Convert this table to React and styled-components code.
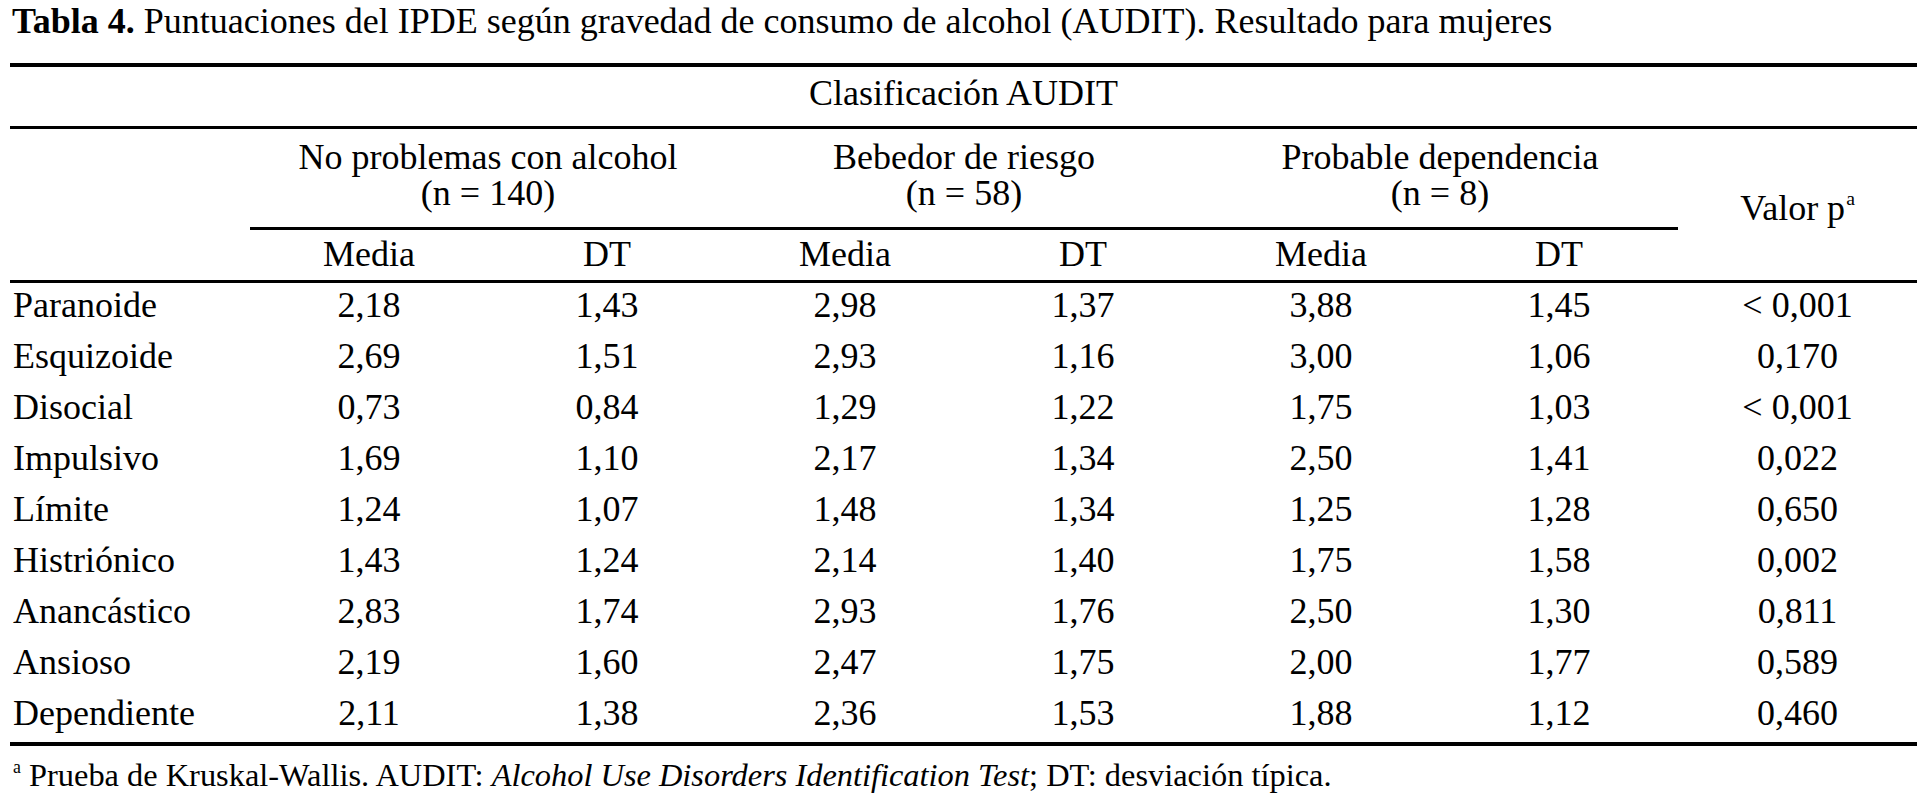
import React from "react";
import styled, { createGlobalStyle } from "styled-components";

const GlobalStyle = createGlobalStyle`
  body {
    margin: 0;
    background: #ffffff;
    color: #000000;
    font-family: "Liberation Serif", "Times New Roman", serif;
  }
`;

const Page = styled.div`
  width: 1907px;
  padding-left: 10px;
`;

const Caption = styled.div`
  font-size: 36px;
  line-height: 40px;
  padding: 1px 0 0 2px;
  margin-bottom: 22px;
  white-space: nowrap;

  b {
    font-weight: 700;
  }
`;

const Table = styled.table`
  width: 1907px;
  table-layout: fixed;
  border-collapse: separate;
  border-spacing: 0;
  border-top: 4px solid #000;
  border-bottom: 4px solid #000;
  font-size: 36px;
  line-height: 36px;
`;

const Cell = styled.td`
  padding: ${(p) => p.$pad || "4px 0 11px"};
  text-align: ${(p) => (p.$left ? "left" : "center")};
  padding-left: ${(p) => (p.$left ? "3px" : "0")};
  vertical-align: ${(p) => p.$valign || "top"};
  border-bottom: ${(p) => (p.$rule ? "3px solid #000" : "none")};
  white-space: nowrap;
`;

const GroupLine = styled.div`
  height: 36px;
  line-height: 36px;
`;

const Sup = styled.sup`
  font-size: 0.55em;
  line-height: 0;
  vertical-align: 0.75em;
  margin-left: ${(p) => p.$gap || "0"};
`;

const Note = styled.div`
  font-size: 32.4px;
  line-height: 38px;
  padding: 10px 0 0 3px;
  white-space: nowrap;

  i {
    font-style: italic;
  }
`;

const groups = [
  { name: "No problemas con alcohol", n: 140 },
  { name: "Bebedor de riesgo", n: 58 },
  { name: "Probable dependencia", n: 8 },
];

const rows = [
  ["Paranoide", "2,18", "1,43", "2,98", "1,37", "3,88", "1,45", "< 0,001"],
  ["Esquizoide", "2,69", "1,51", "2,93", "1,16", "3,00", "1,06", "0,170"],
  ["Disocial", "0,73", "0,84", "1,29", "1,22", "1,75", "1,03", "< 0,001"],
  ["Impulsivo", "1,69", "1,10", "2,17", "1,34", "2,50", "1,41", "0,022"],
  ["Límite", "1,24", "1,07", "1,48", "1,34", "1,25", "1,28", "0,650"],
  ["Histriónico", "1,43", "1,24", "2,14", "1,40", "1,75", "1,58", "0,002"],
  ["Anancástico", "2,83", "1,74", "2,93", "1,76", "2,50", "1,30", "0,811"],
  ["Ansioso", "2,19", "1,60", "2,47", "1,75", "2,00", "1,77", "0,589"],
  ["Dependiente", "2,11", "1,38", "2,36", "1,53", "1,88", "1,12", "0,460"],
];

function App() {
  return (
    <Page>
      <GlobalStyle />
      <Caption>
        <b>Tabla 4.</b> Puntuaciones del IPDE según gravedad de consumo de
        alcohol (AUDIT). Resultado para mujeres
      </Caption>
      <Table>
        <colgroup>
          <col style={{ width: 240 }} />
          {[0, 1, 2, 3, 4, 5].map((i) => (
            <col key={i} style={{ width: 238 }} />
          ))}
          <col style={{ width: 239 }} />
        </colgroup>
        <thead>
          <tr>
            <Cell colSpan={8} $pad="8px 0 15px" $rule>
              Clasificación AUDIT
            </Cell>
          </tr>
          <tr>
            <Cell rowSpan={2} $rule />
            {groups.map((g) => (
              <Cell key={g.name} colSpan={2} $pad="10px 0 16px" $rule>
                <GroupLine>{g.name}</GroupLine>
                <GroupLine>({"n = " + g.n})</GroupLine>
              </Cell>
            ))}
            <Cell rowSpan={2} $rule $valign="middle" $pad="6px 0 0">
              Valor p<Sup $gap="1px">a</Sup>
            </Cell>
          </tr>
          <tr>
            {groups.map((g) => (
              <React.Fragment key={g.name}>
                <Cell $pad="6px 0 8px" $rule>
                  Media
                </Cell>
                <Cell $pad="6px 0 8px" $rule>
                  DT
                </Cell>
              </React.Fragment>
            ))}
          </tr>
        </thead>
        <tbody>
          {rows.map((r) => (
            <tr key={r[0]}>
              <Cell $left>{r[0]}</Cell>
              {r.slice(1).map((v, i) => (
                <Cell key={i}>{v}</Cell>
              ))}
            </tr>
          ))}
        </tbody>
      </Table>
      <Note>
        <Sup>a</Sup> Prueba de Kruskal-Wallis. AUDIT:{" "}
        <i>Alcohol Use Disorders Identification Test</i>; DT: desviación típica.
      </Note>
    </Page>
  );
}

export default App;
